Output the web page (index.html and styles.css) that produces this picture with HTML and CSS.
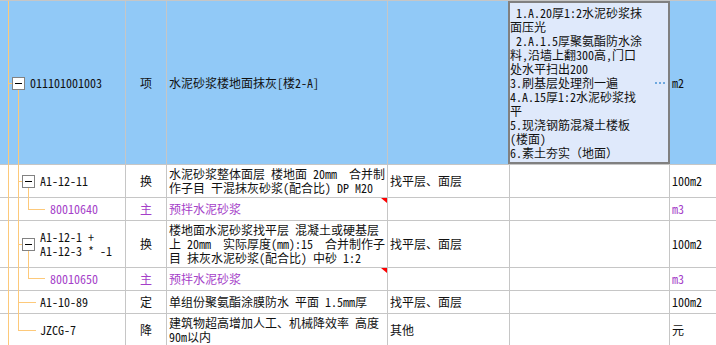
FILE: index.html
```html
<!DOCTYPE html>
<html lang="zh-CN">
<head>
<meta charset="utf-8">
<title>清单</title>
<link rel="stylesheet" href="styles.css">
</head>
<body>
<div class="sheet">
  <div class="row r-main selected">
    <div class="cell c-code lv0">011101001003</div>
    <div class="cell c-type">项</div>
    <div class="cell c-name"><span class="t">水泥砂浆楼地面抹灰[楼2-A]</span></div>
    <div class="cell c-feat"></div>
    <div class="cell c-edit">
      <div class="edit-text"> 1.A.20厚1:2水泥砂浆抹<br>面压光<br> 2.A.1.5厚聚氨酯防水涂<br>料,沿墙上翻300高,门口<br>处水平扫出200<br>3.刷基层处理剂一遍<br>4.A.15厚1:2水泥砂浆找<br>平<br>5.现浇钢筋混凝土楼板<br>(楼面)<br>6.素土夯实（地面）</div>
      <div class="dots"><i></i><i></i><i></i></div>
    </div>
    <div class="cell c-unit">m2</div>
  </div>

  <div class="row r-32">
    <div class="cell c-code lv1">A1-12-11</div>
    <div class="cell c-type">换</div>
    <div class="cell c-name"><span class="t">水泥砂浆整体面层 楼地面 20mm  合并制<br>作子目 干混抹灰砂浆(配合比) DP M20</span></div>
    <div class="cell c-feat">找平层、面层</div>
    <div class="cell c-desc"></div>
    <div class="cell c-unit">100m2</div>
  </div>

  <div class="row r-22 mat">
    <div class="cell c-code lv2">80010640</div>
    <div class="cell c-type">主</div>
    <div class="cell c-name flag"><span class="t">预拌水泥砂浆</span></div>
    <div class="cell c-feat"></div>
    <div class="cell c-desc"></div>
    <div class="cell c-unit">m3</div>
  </div>

  <div class="row r-46">
    <div class="cell c-code lv1"><span class="t">A1-12-1 +<br>A1-12-3 * -1</span></div>
    <div class="cell c-type">换</div>
    <div class="cell c-name"><span class="t">楼地面水泥砂浆找平层 混凝土或硬基层<br>上 20mm  实际厚度(mm):15  合并制作子<br>目 抹灰水泥砂浆(配合比) 中砂 1:2</span></div>
    <div class="cell c-feat">找平层、面层</div>
    <div class="cell c-desc"></div>
    <div class="cell c-unit">100m2</div>
  </div>

  <div class="row r-22 mat">
    <div class="cell c-code lv2">80010650</div>
    <div class="cell c-type">主</div>
    <div class="cell c-name flag"><span class="t">预拌水泥砂浆</span></div>
    <div class="cell c-feat"></div>
    <div class="cell c-desc"></div>
    <div class="cell c-unit">m3</div>
  </div>

  <div class="row r-22">
    <div class="cell c-code lv1">A1-10-89</div>
    <div class="cell c-type">定</div>
    <div class="cell c-name"><span class="t">单组份聚氨酯涂膜防水 平面 1.5mm厚</span></div>
    <div class="cell c-feat">找平层、面层</div>
    <div class="cell c-desc"></div>
    <div class="cell c-unit">100m2</div>
  </div>

  <div class="row r-32">
    <div class="cell c-code lv1">JZCG-7</div>
    <div class="cell c-type">降</div>
    <div class="cell c-name"><span class="t">建筑物超高增加人工、机械降效率 高度<br>90m以内</span></div>
    <div class="cell c-feat">其他</div>
    <div class="cell c-desc"></div>
    <div class="cell c-unit">元</div>
  </div>

  <svg class="tree" width="125" height="345" viewBox="0 0 125 345" aria-hidden="true">
    <g stroke="#fdc97a" stroke-width="1" fill="none" shape-rendering="crispEdges">
      <line x1="8.5" y1="0" x2="8.5" y2="345"/>
      <line x1="8" y1="82.5" x2="12" y2="82.5"/>
      <line x1="18.5" y1="89" x2="18.5" y2="330"/>
      <line x1="18" y1="180.5" x2="22" y2="180.5"/>
      <line x1="28.5" y1="187" x2="28.5" y2="208"/>
      <line x1="28" y1="208.5" x2="45" y2="208.5"/>
      <line x1="18" y1="243.5" x2="22" y2="243.5"/>
      <line x1="28.5" y1="250" x2="28.5" y2="277"/>
      <line x1="28" y1="277.5" x2="45" y2="277.5"/>
      <line x1="18" y1="301.5" x2="36" y2="301.5"/>
      <line x1="18" y1="329.5" x2="36" y2="329.5"/>
    </g>
    <g shape-rendering="crispEdges">
      <rect x="12.5" y="76.5" width="12" height="12" fill="#fff" stroke="#828282"/>
      <line x1="15" y1="82.5" x2="22" y2="82.5" stroke="#000"/>
      <rect x="22.5" y="174.5" width="12" height="12" fill="#fff" stroke="#828282"/>
      <line x1="25" y1="180.5" x2="32" y2="180.5" stroke="#000"/>
      <rect x="22.5" y="237.5" width="12" height="12" fill="#fff" stroke="#828282"/>
      <line x1="25" y1="243.5" x2="32" y2="243.5" stroke="#000"/>
    </g>
  </svg>
</div>
</body>
</html>
```
FILE: styles.css
```css
html, body {
  margin: 0;
  padding: 0;
  background: #fff;
}

.sheet {
  position: relative;
  width: 716px;
  height: 345px;
  overflow: hidden;
  border-top: 1px solid #c6c6c6;
  font-family: "Noto Sans Mono CJK SC", "Noto Sans CJK SC", "DejaVu Sans Mono", monospace;
  font-size: 12px;
  line-height: 14px;
  color: #111;
}

.row {
  display: grid;
  grid-template-columns: 126px 41px 221px 122px 160px 1fr;
  border-bottom: 1px solid #c6c6c6;
}

.r-main { height: 163px; }
.r-32 { height: 32px; }
.r-22 { height: 22px; }
.r-46 { height: 46px; }

.cell {
  position: relative;
  display: flex;
  align-items: center;
  border-right: 1px solid #c6c6c6;
  white-space: pre;
  overflow: hidden;
  min-width: 0;
}

.cell:last-child { border-right: none; }

.selected .cell { background: #91c9f7; }

.c-code.lv0 { padding-left: 30px; }
.c-code.lv1 { padding-left: 40px; }
.c-code.lv2 { padding-left: 50px; }

.c-type { justify-content: center; }

.c-name, .c-feat, .c-unit { padding-left: 2px; }

.mat .cell { color: #a53fc9; }

.flag::after {
  content: "";
  position: absolute;
  top: 0;
  right: 0;
  width: 0;
  height: 0;
  border-top: 5px solid #f00;
  border-left: 6px solid transparent;
}

.selected .c-edit {
  background: #dfe9fb;
  border: 2px solid #808080;
  margin-left: -2px;
  padding-left: 0;
  justify-content: space-between;
  overflow: visible;
}

.edit-text {
  white-space: pre;
}

.dots {
  display: flex;
  gap: 2px;
  padding-right: 3px;
}

.dots i {
  display: block;
  width: 2px;
  height: 2px;
  background: #6ea8df;
}

.tree {
  position: absolute;
  top: 0;
  left: 0;
  pointer-events: none;
}
```
